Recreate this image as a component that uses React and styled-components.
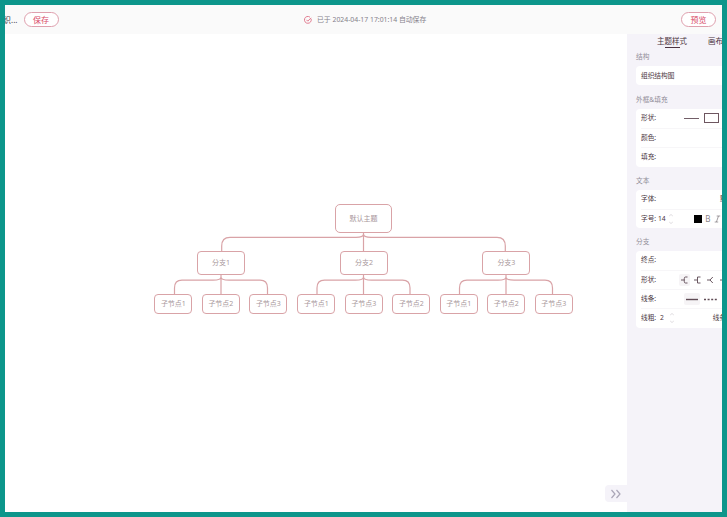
import React from 'react';
import styled, { createGlobalStyle } from 'styled-components';

const Global = createGlobalStyle`
  * { box-sizing: border-box; }
  body { margin: 0; overflow: hidden; font-family: "Noto Sans", "Noto Sans CJK SC", sans-serif; }
`;

const Frame = styled.div`
  width: 727px;
  height: 517px;
  border: 5px solid #0c968b;
  display: flex;
  flex-direction: column;
  background: #fff;
  overflow: hidden;
`;
const TopBar = styled.header`
  height: 29px;
  flex: none;
  display: grid;
  grid-template-columns: 299px 1fr auto;
  align-items: center;
  background: #fafafa;
  padding-right: 6px;
`;
const FileArea = styled.div`
  display: flex;
  align-items: center;
  gap: 6px;
`;
const FileName = styled.span`
  width: 12.5px;
  height: 12px;
  overflow: hidden;
  display: flex;
  justify-content: flex-end;
  white-space: nowrap;
  font-size: 8px;
  line-height: 12px;
  color: #43373f;
`;
const PillButton = styled.button`
  width: 35px;
  height: 15px;
  padding: 0;
  border: 1px solid #dfa0ae;
  border-radius: 8px;
  background: #fff;
  color: #d84a68;
  font: 8px/13px "Noto Sans CJK SC", sans-serif;
`;
const SaveStatus = styled.div`
  display: flex;
  align-items: center;
  gap: 5px;
  color: #85818a;
  font-size: 6.85px;
  line-height: 12px;
  white-space: nowrap;
`;
const Main = styled.div`
  flex: 1;
  display: flex;
  min-height: 0;
`;
const Canvas = styled.main`
  flex: 1;
  position: relative;
  background: #fff;
`;
const Links = styled.svg`
  position: absolute;
  inset: 0;
`;
const Node = styled.div`
  position: absolute;
  left: ${(p) => p.$x}px;
  top: ${(p) => p.$y}px;
  width: ${(p) => p.$w}px;
  height: ${(p) => p.$h}px;
  display: flex;
  align-items: center;
  justify-content: center;
  border: 1px solid #d9a3a7;
  border-radius: ${(p) => p.$r}px;
  background: #fff;
  color: #a8979b;
  font-size: 7px;
  line-height: 10px;
  white-space: nowrap;
`;
const Collapse = styled.button`
  position: absolute;
  right: 0;
  bottom: 10px;
  width: 22px;
  height: 17px;
  padding: 0;
  display: flex;
  align-items: center;
  justify-content: center;
  border: 0;
  border-radius: 4px 0 0 4px;
  background: #f5f3f9;
`;
const Panel = styled.aside`
  width: 95px;
  flex: none;
  overflow: hidden;
  padding-left: 9px;
  background: #f5f3f9;
`;
const Tabs = styled.nav`
  display: flex;
  gap: 21px;
  height: 14px;
  padding: 2px 0 0 21px;
`;
const Tab = styled.div`
  flex: none;
  height: 12px;
  display: flex;
  flex-direction: column;
  align-items: center;
  color: #4b3340;
  font-size: 7.5px;
  line-height: 11px;
  &::after {
    content: "";
    flex: none;
    width: 15px;
    height: 1px;
    background: ${(p) => (p.$active ? '#4b3340' : 'transparent')};
  }
`;
const SectionTitle = styled.h3`
  margin: ${(p) => p.$top}px 0 4px;
  height: 10px;
  font-size: 6.7px;
  line-height: 10px;
  font-weight: 400;
  color: #918d98;
`;
const Card = styled.section`
  width: 110px;
  padding-left: 5px;
  border-radius: 4px;
  background: #fff;
`;
const Row = styled.div`
  height: 19.25px;
  display: flex;
  align-items: center;
  white-space: nowrap;
  color: #493540;
  font-size: 6.7px;
  line-height: 10px;
  & + & { border-top: 1px solid #f7f6f8; }
`;
const Label = styled.span`
  flex: none;
  width: ${(p) => p.$w || 17}px;
`;
const Tools = styled.div`
  display: flex;
  align-items: center;
  margin-left: ${(p) => p.$left}px;
  gap: ${(p) => p.$gap || 0}px;
`;
const LineSample = styled.span`
  width: 15px;
  height: 1px;
  background: #725e68;
`;
const BoxSample = styled.span`
  width: 15px;
  height: 10px;
  border: 1px solid #6e5660;
`;
const Swatch = styled.span`
  width: 8px;
  height: 8px;
  background: #000;
`;
const Letter = styled.span`
  font-size: 8px;
  color: #8c858a;
`;
const Choice = styled.span`
  width: ${(p) => p.$w}px;
  height: 12px;
  flex: none;
  display: flex;
  align-items: center;
  justify-content: center;
  border-radius: 2px;
  background: ${(p) => (p.$on ? '#f6f4f6' : 'transparent')};
`;
const StepperIcon = styled.svg`
  flex: none;
  margin-left: 2px;
`;

const branches = [
  { x: 192, cx: 216, leaves: ['子节点1', '子节点2', '子节点3'], name: '分支1' },
  { x: 335, cx: 358.5, leaves: ['子节点1', '子节点3', '子节点2'], name: '分支2' },
  { x: 477.4, cx: 501, leaves: ['子节点1', '子节点2', '子节点3'], name: '分支3' },
];

const Stepper = () => (
  <StepperIcon width="6" height="12" viewBox="0 0 6 12" fill="none" stroke="#c9c5cb" strokeWidth=".6">
    <path d="M1.2 3 3 1.5 4.8 3M1.2 9 3 10.5 4.8 9" />
  </StepperIcon>
);

const forkPaths = {
  bracket: 'M0 4H3M6.5 1H4.5Q3.3 1 3.3 2.5V5.5Q3.3 7 4.5 7H6.5',
  square: 'M0 4H3M6.5 1H3.5V7H6.5',
  angle: 'M0 4H3L5.8 1M3 4 5.8 7',
  curve: 'M0 4H3Q4 1 6.5 1M3 4Q4 7 6.5 7',
};
const Fork = ({ kind }) => (
  <svg width="7" height="8" viewBox="0 0 7 8" fill="none" stroke="#5a4650" strokeWidth=".9">
    <path d={forkPaths[kind]} />
  </svg>
);

export default function App() {
  return (
    <>
      <Global />
      <Frame>
        <TopBar>
          <FileArea>
            <FileName>织...</FileName>
            <PillButton>保存</PillButton>
          </FileArea>
          <SaveStatus>
            <svg width="8" height="8" viewBox="0 0 7 7" fill="none" stroke="#df7187" strokeWidth=".8">
              <path d="M6.2 2.4A3 3 0 1 1 5.2 1M2.1 3.3 3.3 4.5 6.2 1.6" />
            </svg>
            <span>已于 2024-04-17 17:01:14 自动保存</span>
          </SaveStatus>
          <PillButton>预览</PillButton>
        </TopBar>
        <Main>
          <Canvas>
            <Links width="622" height="478" fill="none" stroke="#d9a3a7" strokeWidth="1.2">
              <path d="M358.5 198V218M358.5 200Q358.5 203.3 351 203.3H225Q216.7 203.3 216.7 212V218M358.5 200Q358.5 203.3 366 203.3H492Q500.3 203.3 500.3 212V218" />
              {branches.map(({ cx }) => (
                <path
                  key={cx}
                  d={`M${cx} 241V260M${cx} 243Q${cx} 246.2 ${cx - 8} 246.2H${cx - 39}Q${cx - 46.5} 246.2 ${cx - 46.5} 254V260M${cx} 243Q${cx} 246.2 ${cx + 8} 246.2H${cx + 39}Q${cx + 46.5} 246.2 ${cx + 46.5} 254V260`}
                />
              ))}
            </Links>
            <Node $x={330} $y={170} $w={57} $h={29} $r={5}>默认主题</Node>
            {branches.map((b) => (
              <React.Fragment key={b.name}>
                <Node $x={b.x} $y={217.4} $w={48} $h={24} $r={4}>{b.name}</Node>
                {b.leaves.map((leaf, i) => (
                  <Node key={leaf} $x={b.x - 42.6 + i * 47.5} $y={260} $w={38} $h={19.5} $r={4}>{leaf}</Node>
                ))}
              </React.Fragment>
            ))}
            <Collapse>
              <svg width="12" height="10" viewBox="0 0 12 10" fill="none" stroke="#aaa6b7" strokeWidth="1.2">
                <path d="M1.5 1 5 5 1.5 9M6.5 1 10 5 6.5 9" />
              </svg>
            </Collapse>
          </Canvas>
          <Panel>
            <Tabs>
              <Tab $active>主题样式</Tab>
              <Tab>画布</Tab>
            </Tabs>
            <SectionTitle $top={4}>结构</SectionTitle>
            <Card>
              <Row><Label>组织结构图</Label></Row>
            </Card>
            <SectionTitle $top={9.5}>外框&amp;填充</SectionTitle>
            <Card>
              <Row>
                <Label>形状:</Label>
                <Tools $left={26} $gap={4.5}><LineSample /><BoxSample /></Tools>
              </Row>
              <Row><Label>颜色:</Label></Row>
              <Row><Label>填充:</Label></Row>
            </Card>
            <SectionTitle $top={9.25}>文本</SectionTitle>
            <Card>
              <Row>
                <Label>字体:</Label>
                <Tools $left={62}>默认</Tools>
              </Row>
              <Row>
                <Label>字号:</Label>
                <span>14</span>
                <Stepper />
                <Tools $left={20} $gap={3.5}>
                  <Swatch />
                  <Letter>B</Letter>
                  <svg width="7" height="8" viewBox="0 0 7 8" fill="none" stroke="#8c858a" strokeWidth=".8">
                    <path d="M2.7 1H6.2M4.5 1 2.4 7M.7 7H4.2" />
                  </svg>
                </Tools>
              </Row>
            </Card>
            <SectionTitle $top={8.25}>分支</SectionTitle>
            <Card>
              <Row><Label>终点:</Label></Row>
              <Row>
                <Label>形状:</Label>
                <Tools $left={21} $gap={2}>
                  <Choice $w={11} $on><Fork kind="bracket" /></Choice>
                  <Choice $w={11}><Fork kind="square" /></Choice>
                  <Choice $w={11}><Fork kind="angle" /></Choice>
                  <Choice $w={11}><Fork kind="curve" /></Choice>
                </Tools>
              </Row>
              <Row>
                <Label>线条:</Label>
                <Tools $left={26} $gap={3}>
                  <Choice $w={16} $on>
                    <svg width="12" height="3"><path d="M0 1.5H12" stroke="#604b55" strokeWidth="1.4" /></svg>
                  </Choice>
                  <Choice $w={14}>
                    <svg width="13" height="3"><path d="M0 1.5H13" stroke="#604b55" strokeWidth="1.3" strokeDasharray="2 1.6" /></svg>
                  </Choice>
                </Tools>
              </Row>
              <Row>
                <Label $w={19}>线粗:</Label>
                <span>2</span>
                <Tools $left={3}><Stepper /></Tools>
                <Tools $left={38}>线条</Tools>
              </Row>
            </Card>
          </Panel>
        </Main>
      </Frame>
    </>
  );
}
